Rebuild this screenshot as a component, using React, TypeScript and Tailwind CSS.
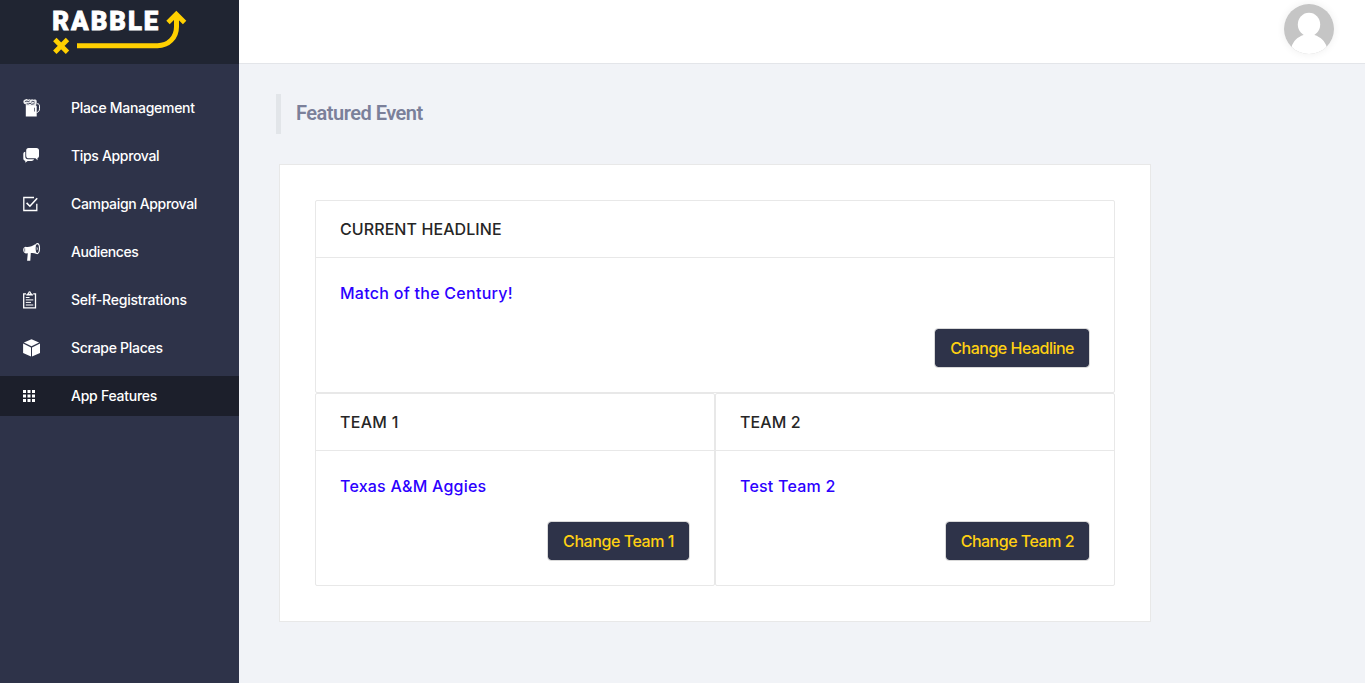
import type { ReactNode } from "react";

function Icon({ children }: { children: ReactNode }) {
  return (
    <svg width="20" height="20" viewBox="0 0 20 20" className="block shrink-0" fill="#fff">
      {children}
    </svg>
  );
}

const BeerIcon = () => (
  <Icon>
    <path fillRule="evenodd" d="M2.800 7.800h10.900v10.800H2.800z M11 9.800h.7v3.600H11z" />
    <path d="M.4 3.900C.2 2.600 1.100 1.600 2.400 1.600c.8-.7 2-.6 2.600.1.900-.7 2-.7 2.700 0 .8-.7 2-.7 2.800 0 1.300-.5 2.900-.2 3.200 1.200.2 1.100.1 2-.3 2.900L12.900 8H2.800V6.200C1.300 6.200.6 5.200.4 3.900z" opacity=".9" />
    <path d="M2.200 3.600l1.800-.6 1.200.7 1.600-.9M8.200 4.200l1.600-.9 2 .9M3.600 5.900h2.200l1.200-.8 1.700 1.200 2.800-.6" stroke="#2e3349" strokeWidth=".9" fill="none" />
    <path d="M13.700 5.700h.8c1.300 0 2 1 2 2.400v2.700c0 2-1.100 3.500-2.900 3.700" stroke="#fff" strokeWidth="1" fill="none" />
  </Icon>
);

const ChatIcon = () => (
  <Icon>
    <path d="M5.500 2h8c1.600 0 2.500.9 2.500 2.500v5.300c0 1.300-.5 2-1.500 2.300v2.100l-2-1.900H6c-1.900 0-2.800-.9-2.800-2.600V4.500C3.200 2.900 4 2 5.500 2z" />
    <path d="M2.300 5.800v4.800c0 1.700.9 2.700 2.700 2.700h6c-.4 1.100-1.200 1.700-2.500 1.700H4.600l-2.300 1.800v-2C1 14.500.3 13.800.3 12.500V8.300c0-1.400.7-2.200 2-2.500z" />
  </Icon>
);

const CheckIcon = () => (
  <Icon>
    <path d="M11 3.500H.8v13h13V9.800" fill="none" stroke="#fff" strokeWidth="1.300" />
    <path d="M3.600 8.900l3.300 3.300 7.300-8" fill="none" stroke="#fff" strokeWidth="1.600" />
  </Icon>
);

const MegaphoneIcon = () => (
  <Icon>
    <path d="M2.600 4.700C5.300 5.500 9 4.500 12.600 2.100c-1.100 2.900-.8 6.900.8 9.700-2-.8-4.100-1.100-5.600-.7l-.5 7.600H4.100l.7-7.400-1.900.1C1.300 10.900.2 9.700.2 8c0-1.900.9-3 2.400-3.300z" />
    <ellipse cx="14.300" cy="6.600" rx="2.200" ry="5" fill="none" stroke="#fff" strokeWidth="1.100" />
    <path d="M13.700 4.900c1.200.2 1.200 2.900.1 3.400z" />
    <path d="M1.700 6.300v3.400" stroke="#2e3349" strokeWidth=".6" />
  </Icon>
);

const ClipboardIcon = () => (
  <Icon>
    <path d="M3 3.800H.7v14.100h11.800V3.800H10.200" fill="none" stroke="#fff" strokeWidth="1.300" />
    <path fillRule="evenodd" d="M3.200 5.600c0-1.500.9-2.200 1.900-2.300.1-1.300.6-2 1.500-2s1.400.7 1.500 2c1 .1 1.900.8 1.900 2.300z M6.100 2.700h1v1h-1z" />
    <path d="M2.800 7.500h3.700M2.800 9.900h7.500M2.800 12.400h5.200M2.800 15h7.500" stroke="#fff" strokeWidth="1" />
  </Icon>
);

const CubeIcon = () => (
  <Icon>
    <path d="M8.500 1.200l7.600 3.300-7.600 3.700L.9 4.500zM.1 5.600l7.900 3.800v9.200L.1 14.900zM17 5.600L9 9.400v9.200l8-3.700z" />
  </Icon>
);

const GridIcon = () => (
  <Icon>
    <path d="M0 4h3v3H0zM4.500 4h3v3h-3zM9 4h3v3H9zM0 8.500h3v3H0zM4.500 8.500h3v3h-3zM9 8.500h3v3H9zM0 13h3v3H0zM4.500 13h3v3h-3zM9 13h3v3H9z" />
  </Icon>
);

const items = [
  { label: "Place Management", icon: <BeerIcon />, spacing: "tracking-[-0.29px]" },
  { label: "Tips Approval", icon: <ChatIcon />, spacing: "tracking-[-0.33px]" },
  { label: "Campaign Approval", icon: <CheckIcon />, spacing: "tracking-[-0.34px]" },
  { label: "Audiences", icon: <MegaphoneIcon />, spacing: "tracking-[-0.39px]" },
  { label: "Self-Registrations", icon: <ClipboardIcon />, spacing: "tracking-[-0.22px]" },
  { label: "Scrape Places", icon: <CubeIcon />, spacing: "tracking-[-0.28px]" },
  { label: "App Features", icon: <GridIcon />, spacing: "tracking-[-0.25px]", active: true },
];

function Logo() {
  return (
    <svg width="239" height="64" viewBox="0 0 239 64" className="block">
      <text x="52.300" y="29.600" fill="#fff" stroke="#fff" strokeWidth=".8" fontFamily="Roboto, sans-serif" fontWeight="900" fontSize="25.800" textLength="106" lengthAdjust="spacing">
        RABBLE
      </text>
      <g fill="none" stroke="#ffd000">
        <path d="M54.800 39.500l12.700 12.700M67.500 39.500L54.800 52.200" strokeWidth="4.800" />
        <path d="M77 45.700h80.500c11 0 19-8 19-19V14" strokeWidth="5" />
        <path d="M168 22.500l8.300-8.300 8.300 8.300" strokeWidth="4.800" />
      </g>
    </svg>
  );
}

interface PanelProps {
  title: string;
  value: string;
  action: string;
  titleSpacing?: string;
  valueSpacing?: string;
  actionSpacing?: string;
}

function Panel({
  title,
  value,
  action,
  titleSpacing = "tracking-[0.08px]",
  valueSpacing = "tracking-[0.22px]",
  actionSpacing = "tracking-[-0.5px]",
}: PanelProps) {
  return (
    <section className="flex h-[193px] flex-col rounded-[2px] border border-[#e8e8e8] bg-white">
      <h2 className={`h-[57px] shrink-0 border-b border-[#e8e8e8] px-6 text-base font-medium leading-[56px] text-[#262626] ${titleSpacing}`}>
        {title}
      </h2>
      <div className="flex grow flex-col items-end justify-between p-6">
        <p className={`self-stretch text-base font-medium leading-[22px] text-[#2c00ff] ${valueSpacing}`}>{value}</p>
        <button className={`h-10 rounded-[4px] border border-[#d9d9d9] bg-[#2e3349] bg-clip-padding px-[15px] text-base font-medium text-[#ffd012] ${actionSpacing}`}>
          {action}
        </button>
      </div>
    </section>
  );
}

export default function App() {
  return (
    <div className="flex h-[683px] w-[1365px] overflow-hidden bg-[#f1f3f7] font-['Inter',sans-serif]">
      <aside className="w-[239px] shrink-0 bg-[#2e3349]">
        <div className="h-16 bg-[#202532]">
          <Logo />
        </div>
        <nav className="flex flex-col gap-2 pt-6">
          {items.map((item) => (
            <a
              key={item.label}
              className={`flex h-10 items-center gap-7 pl-[23px] text-sm font-medium text-white ${item.spacing} ${item.active ? "bg-[#1c1f2b]" : ""}`}
            >
              {item.icon}
              <span>{item.label}</span>
            </a>
          ))}
        </nav>
      </aside>
      <div className="grow">
        <header className="flex h-16 justify-end border-b border-[#e3e5e9] bg-white pr-[31px] pt-1">
          <div className="h-[50px] w-[50px] rounded-full shadow-[0_0_8px_rgba(0,0,0,0.07)]">
            <svg width="50" height="50" viewBox="0 0 50 50" className="block overflow-hidden rounded-full">
              <rect width="50" height="50" fill="#c5c5c5" />
              <ellipse cx="25" cy="20.500" rx="11.200" ry="11.800" fill="#fff" />
              <path d="M19.500 28h11v3c6 2 10.500 6 12.300 12L36 50H14l-6.500-7c1.800-6 6-10 12-12z" fill="#fff" />
            </svg>
          </div>
        </header>
        <main className="pl-[37px] pt-[30px]">
          <h1 className="h-10 border-l-[5px] border-[#e2e5e9] pl-[15px] font-['Roboto',sans-serif] text-[20px] font-semibold leading-[39px] tracking-[-0.5px] text-[#7b809a]">
            Featured Event
          </h1>
          <div className="ml-[3px] mt-[30px] w-[872px] border border-[#e8e8e8] bg-white p-[35px]">
            <Panel title="CURRENT HEADLINE" value="Match of the Century!" action="Change Headline" valueSpacing="tracking-[0.27px]" />
            <div className="grid grid-cols-2">
              <Panel title="TEAM 1" value="Texas A&M Aggies" action="Change Team 1" titleSpacing="tracking-[0.28px]" actionSpacing="tracking-[-0.44px]" />
              <Panel title="TEAM 2" value="Test Team 2" action="Change Team 2" />
            </div>
          </div>
        </main>
      </div>
    </div>
  );
}
